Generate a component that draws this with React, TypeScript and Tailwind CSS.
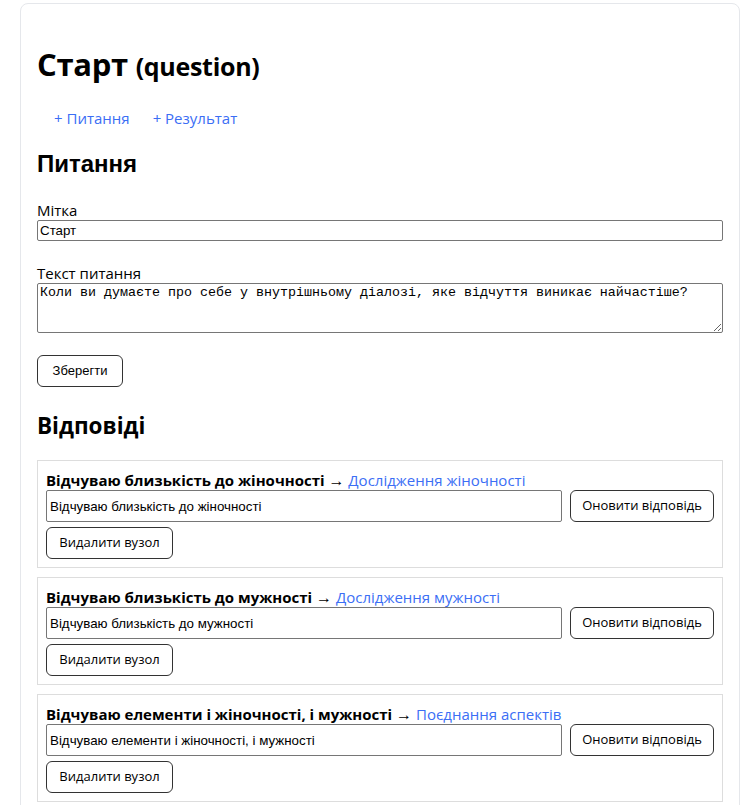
import React from "react";

// Дані відповідей
interface Answer {
  id: string;
  text: string;
  target: string;
}

const ANSWERS: Answer[] = [
  { id: "1", text: "Відчуваю близькість до жіночності", target: "Дослідження жіночності" },
  { id: "2", text: "Відчуваю близькість до мужності", target: "Дослідження мужності" },
  { id: "3", text: "Відчуваю елементи і жіночності, і мужності", target: "Поєднання аспектів" },
];

const segoe = "font-['Open_Sans','Noto_Sans',sans-serif]";
const arial = "font-['Liberation_Sans',Arial,sans-serif]";

export default function App() {
  return (
    <div className="bg-white min-h-screen pl-5 pt-[3px] text-black">
      <div className="w-[720px] border border-[#e5e7eb] rounded-lg px-4 pt-[41px] pb-4">
        {/* Заголовок вузла */}
        <h1 className={`${segoe} text-[31px] font-bold leading-[38px] tracking-[-0.3px]`}>
          Старт <span className="text-[25px]">(question)</span>
        </h1>

        {/* Дії */}
        <div className={`${segoe} flex gap-[23px] ml-[17px] mt-[23px] text-[15px] leading-[20px] text-[#3b6ef5]`}>
          <button>+ Питання</button>
          <button>+ Результат</button>
        </div>

        {/* Питання */}
        <h2 className={`${arial} text-[24px] font-bold leading-[28px] mt-[22px]`}>Питання</h2>

        <label className={`${segoe} block text-[15px] leading-[19px] mt-[23px]`}>Мітка</label>
        <input
          defaultValue="Старт"
          className={`${arial} block w-full h-[21px] border border-[#767676] rounded-[2px] px-[2px] text-[13.33px]`}
        />

        <label className={`${segoe} block text-[15px] leading-[19px] mt-[23px]`}>Текст питання</label>
        <textarea
          defaultValue="Коли ви думаєте про себе у внутрішньому діалозі, яке відчуття виникає найчастіше?"
          className="block w-full h-[50px] border border-[#767676] rounded-[2px] px-[2px] py-[1px] text-[13.33px] font-['Liberation_Mono','Courier_New',monospace] leading-[16px]"
        />

        <button
          className={`${arial} mt-[22px] h-8 w-[86px] border border-[#333] rounded-md text-[13px]`}
        >
          Зберегти
        </button>

        {/* Відповіді */}
        <h2 className={`${segoe} text-[22.5px] font-bold leading-[30px] mt-[24px]`}>Відповіді</h2>

        <div className="mt-[19px] flex flex-col gap-[9px]">
          {ANSWERS.map((a) => (
            <div key={a.id} className="border border-[#dddddd] px-2 pt-[9px] pb-2">
              <div className={`${segoe} text-[15px] leading-[20px] h-5`}>
                <span className="font-bold">{a.text}</span>{" "}
                <span className={`${arial} text-[16px] leading-none`}>→</span>{" "}
                <a className="text-[#3b6ef5]">{a.target}</a>
              </div>
              <div className="flex gap-2">
                <input
                  defaultValue={a.text}
                  className={`${arial} flex-1 h-8 border border-[#767676] rounded-[2px] px-[3px] text-[13.33px]`}
                />
                <button className={`${segoe} h-8 w-[144px] border border-[#333] rounded-md text-[13px]`}>
                  Оновити відповідь
                </button>
              </div>
              <button
                className={`${segoe} mt-[5px] h-8 w-[127px] border border-[#333] rounded-md text-[13px]`}
              >
                Видалити вузол
              </button>
            </div>
          ))}
        </div>
      </div>
    </div>
  );
}
